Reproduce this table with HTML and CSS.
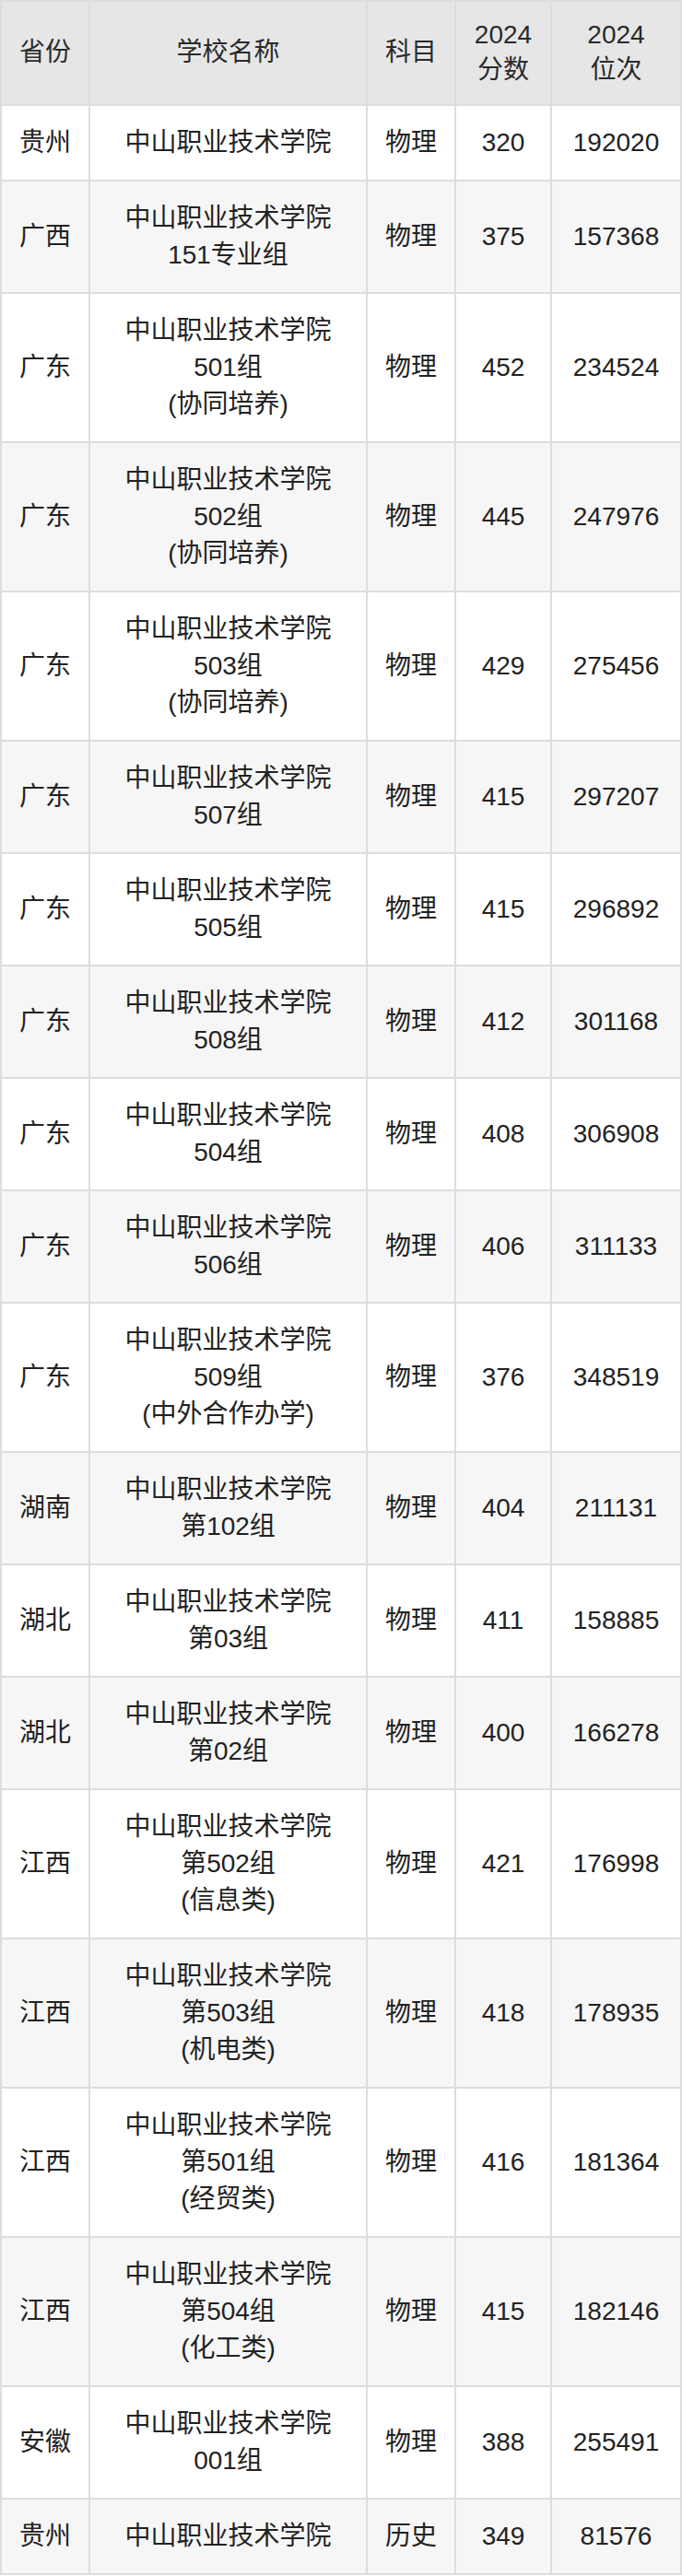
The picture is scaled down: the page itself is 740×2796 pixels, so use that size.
FILE: index.html
```html
<!DOCTYPE html>
<html lang="zh-CN">
<head>
<meta charset="utf-8">
<title>中山职业技术学院 2024 录取分数</title>
<link rel="stylesheet" href="styles.css">
</head>
<body>
<table class="score-table">
  <thead>
    <tr>
      <th class="c-prov">省份</th>
      <th class="c-school">学校名称</th>
      <th class="c-subj">科目</th>
      <th class="c-score">2024<br>分数</th>
      <th class="c-rank">2024<br>位次</th>
    </tr>
  </thead>
  <tbody>
    <tr><td>贵州</td><td>中山职业技术学院</td><td>物理</td><td>320</td><td>192020</td></tr>
    <tr><td>广西</td><td>中山职业技术学院<br>151专业组</td><td>物理</td><td>375</td><td>157368</td></tr>
    <tr><td>广东</td><td>中山职业技术学院<br>501组<br>(协同培养)</td><td>物理</td><td>452</td><td>234524</td></tr>
    <tr><td>广东</td><td>中山职业技术学院<br>502组<br>(协同培养)</td><td>物理</td><td>445</td><td>247976</td></tr>
    <tr><td>广东</td><td>中山职业技术学院<br>503组<br>(协同培养)</td><td>物理</td><td>429</td><td>275456</td></tr>
    <tr><td>广东</td><td>中山职业技术学院<br>507组</td><td>物理</td><td>415</td><td>297207</td></tr>
    <tr><td>广东</td><td>中山职业技术学院<br>505组</td><td>物理</td><td>415</td><td>296892</td></tr>
    <tr><td>广东</td><td>中山职业技术学院<br>508组</td><td>物理</td><td>412</td><td>301168</td></tr>
    <tr><td>广东</td><td>中山职业技术学院<br>504组</td><td>物理</td><td>408</td><td>306908</td></tr>
    <tr><td>广东</td><td>中山职业技术学院<br>506组</td><td>物理</td><td>406</td><td>311133</td></tr>
    <tr><td>广东</td><td>中山职业技术学院<br>509组<br>(中外合作办学)</td><td>物理</td><td>376</td><td>348519</td></tr>
    <tr><td>湖南</td><td>中山职业技术学院<br>第102组</td><td>物理</td><td>404</td><td>211131</td></tr>
    <tr><td>湖北</td><td>中山职业技术学院<br>第03组</td><td>物理</td><td>411</td><td>158885</td></tr>
    <tr><td>湖北</td><td>中山职业技术学院<br>第02组</td><td>物理</td><td>400</td><td>166278</td></tr>
    <tr><td>江西</td><td>中山职业技术学院<br>第502组<br>(信息类)</td><td>物理</td><td>421</td><td>176998</td></tr>
    <tr><td>江西</td><td>中山职业技术学院<br>第503组<br>(机电类)</td><td>物理</td><td>418</td><td>178935</td></tr>
    <tr><td>江西</td><td>中山职业技术学院<br>第501组<br>(经贸类)</td><td>物理</td><td>416</td><td>181364</td></tr>
    <tr><td>江西</td><td>中山职业技术学院<br>第504组<br>(化工类)</td><td>物理</td><td>415</td><td>182146</td></tr>
    <tr><td>安徽</td><td>中山职业技术学院<br>001组</td><td>物理</td><td>388</td><td>255491</td></tr>
    <tr><td>贵州</td><td>中山职业技术学院</td><td>历史</td><td>349</td><td>81576</td></tr>
  </tbody>
</table>
</body>
</html>
```

FILE: styles.css
```css
html, body {
  margin: 0;
  padding: 0;
  background: #ffffff;
}

.score-table {
  width: 740px;
  table-layout: fixed;
  border-collapse: separate;
  border-spacing: 0;
  border-top: 2px solid #dddddd;
  border-left: 2px solid #dddddd;
  font-family: "Liberation Sans", "Noto Sans CJK SC", sans-serif;
  font-size: 28px;
  line-height: 40px;
  color: #222222;
}

.score-table th,
.score-table td {
  box-sizing: border-box;
  border-right: 2px solid #dddddd;
  border-bottom: 2px solid #dddddd;
  text-align: center;
  vertical-align: middle;
  font-weight: normal;
  padding: 20px 0;
}

.score-table th {
  background: #e6e6e6;
  color: #2a2a2a;
  line-height: 38px;
  padding: 17px 0 18px;
}

.c-prov { width: 96px; }
.c-school { width: 301px; }
.c-subj { width: 96px; }
.c-score { width: 104px; }
.c-rank { width: 141px; }

.score-table tbody tr:nth-child(odd) td {
  background: #ffffff;
}

.score-table tbody tr:nth-child(even) td {
  background: #f6f6f6;
}
```
